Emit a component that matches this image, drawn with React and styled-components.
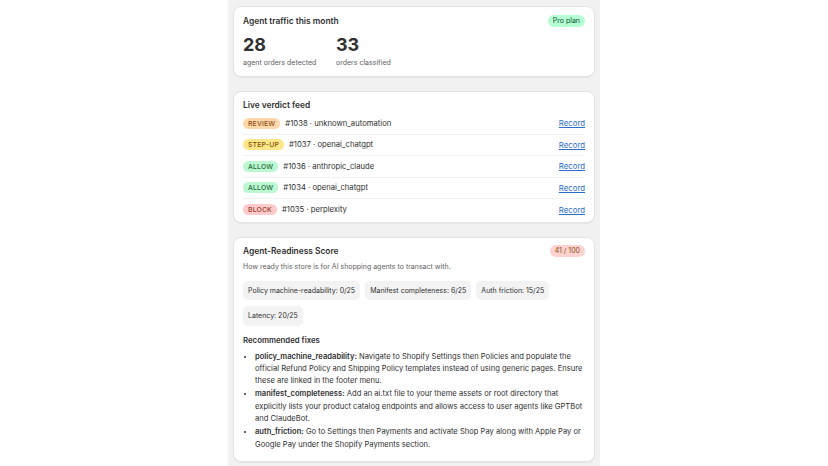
import React from 'react';
import styled, { createGlobalStyle } from 'styled-components';

const GlobalStyle = createGlobalStyle`
  html, body {
    margin: 0;
    padding: 0;
    background: #ffffff;
    font-family: Inter, "Noto Sans", sans-serif;
    color: #303030;
  }
`;

const Column = styled.div`
  width: 372px;
  margin: 0 auto;
  background: #f1f1f1;
  padding: 6px 5px 8px;
  box-sizing: border-box;
  display: flex;
  flex-direction: column;
  gap: 14px;
  min-height: 466px;
`;

const Card = styled.section`
  background: #fff;
  border: 1px solid #e3e3e3;
  border-radius: 8px;
  padding: ${(p) => p.$pad || '7px 9px 7px'};
  box-shadow: 0 1px 0 rgba(0, 0, 0, 0.04);
`;

const Header = styled.div`
  display: flex;
  align-items: center;
  justify-content: space-between;
  height: 14px;
`;

const Title = styled.h2`
  margin: 0;
  font-size: 8.4px;
  font-weight: 600;
  line-height: 14px;
  color: #303030;
`;

const Pill = styled.span`
  display: inline-block;
  font-size: 7px;
  line-height: 12px;
  padding: 0 5px;
  border-radius: 8px;
  background: ${(p) => p.$bg};
  color: ${(p) => p.$fg};
`;

const Stats = styled.div`
  display: flex;
  gap: 19px;
  margin-top: 6px;
`;

const Stat = styled.div`
  display: flex;
  flex-direction: column;
  min-width: 74px;
`;

const Big = styled.div`
  font-size: 18px;
  font-weight: 700;
  line-height: 22px;
  color: #303030;
`;

const Label = styled.div`
  font-size: 7px;
  line-height: 12px;
  color: #616161;
  margin-top: 1px;
`;

const Feed = styled.ul`
  list-style: none;
  margin: 0;
  padding: 0;
  margin-top: 1px;
`;

const Row = styled.li`
  display: flex;
  align-items: center;
  height: 21.5px;
  border-bottom: 1px solid #f1f1f1;
  box-sizing: border-box;
  &:last-child {
    border-bottom: none;
  }
`;

const Verdict = styled.span`
  font-size: 6.8px;
  font-weight: 500;
  line-height: 11px;
  padding: 0 5px;
  border-radius: 6px;
  letter-spacing: 0.2px;
  background: ${(p) => p.$bg};
  color: ${(p) => p.$fg};
  margin-right: 5px;
`;

const RowText = styled.span`
  flex: 1;
  font-size: 7.7px;
  color: #303030;
`;

const RecordLink = styled.a`
  font-size: 7.8px;
  color: #2c6ecb;
  text-decoration: underline;
  cursor: pointer;
`;

const Sub = styled.p`
  margin: 3px 0 0;
  font-size: 7px;
  line-height: 12px;
  color: #616161;
`;

const Chips = styled.div`
  display: flex;
  flex-wrap: wrap;
  gap: 6px 5px;
  margin-top: 8px;
`;

const Chip = styled.span`
  font-size: 7px;
  line-height: 19.5px;
  padding: 0 5px;
  border-radius: 5px;
  background: #f3f3f3;
  color: #303030;
`;

const SectionHead = styled.h3`
  margin: 8px 0 0;
  font-size: 7.8px;
  font-weight: 600;
  line-height: 13px;
`;

const Fixes = styled.ul`
  margin: 4px 0 0;
  padding-left: 12px;
  font-size: 7.6px;
  line-height: 12.4px;
  color: #303030;
`;

const Fix = styled.li`
  margin-bottom: 0.6px;
  & b {
    font-weight: 600;
  }
`;

const tones = {
  REVIEW: { bg: '#fed7aa', fg: '#8a4b14' },
  'STEP-UP': { bg: '#fde68a', fg: '#7a5200' },
  ALLOW: { bg: '#bbf7d0', fg: '#1e6b3c' },
  BLOCK: { bg: '#fecaca', fg: '#9a3d2a' },
};

const feed = [
  { v: 'REVIEW', text: '#1038 · unknown_automation' },
  { v: 'STEP-UP', text: '#1037 · openai_chatgpt' },
  { v: 'ALLOW', text: '#1036 · anthropic_claude' },
  { v: 'ALLOW', text: '#1034 · openai_chatgpt' },
  { v: 'BLOCK', text: '#1035 · perplexity' },
];

const scores = [
  'Policy machine-readability: 0/25',
  'Manifest completeness: 6/25',
  'Auth friction: 15/25',
  'Latency: 20/25',
];

const fixes = [
  {
    key: 'policy_machine_readability',
    text: 'Navigate to Shopify Settings then Policies and populate the official Refund Policy and Shipping Policy templates instead of using generic pages. Ensure these are linked in the footer menu.',
  },
  {
    key: 'manifest_completeness',
    text: 'Add an ai.txt file to your theme assets or root directory that explicitly lists your product catalog endpoints and allows access to user agents like GPTBot and ClaudeBot.',
  },
  {
    key: 'auth_friction',
    text: 'Go to Settings then Payments and activate Shop Pay along with Apple Pay or Google Pay under the Shopify Payments section.',
  },
];

const App = () => (
  <>
    <GlobalStyle />
    <Column>
      <Card $pad="7px 9px 7px">
        <Header>
          <Title>Agent traffic this month</Title>
          <Pill $bg="#b4fed2" $fg="#0c5132">Pro plan</Pill>
        </Header>
        <Stats>
          <Stat>
            <Big>28</Big>
            <Label>agent orders detected</Label>
          </Stat>
          <Stat>
            <Big>33</Big>
            <Label>orders classified</Label>
          </Stat>
        </Stats>
      </Card>

      <Card $pad="6px 9px 1px">
        <Header>
          <Title>Live verdict feed</Title>
        </Header>
        <Feed>
          {feed.map((f) => (
            <Row key={f.text}>
              <Verdict $bg={tones[f.v].bg} $fg={tones[f.v].fg}>{f.v}</Verdict>
              <RowText>{f.text}</RowText>
              <RecordLink>Record</RecordLink>
            </Row>
          ))}
        </Feed>
      </Card>

      <Card $pad="6px 9px 9px">
        <Header>
          <Title>Agent-Readiness Score</Title>
          <Pill $bg="#fed3d1" $fg="#8e4b10">41 / 100</Pill>
        </Header>
        <Sub>How ready this store is for AI shopping agents to transact with.</Sub>
        <Chips>
          {scores.map((s) => (
            <Chip key={s}>{s}</Chip>
          ))}
        </Chips>
        <SectionHead>Recommended fixes</SectionHead>
        <Fixes>
          {fixes.map((f) => (
            <Fix key={f.key}>
              <b>{f.key}:</b> {f.text}
            </Fix>
          ))}
        </Fixes>
      </Card>
    </Column>
  </>
);

export default App;
